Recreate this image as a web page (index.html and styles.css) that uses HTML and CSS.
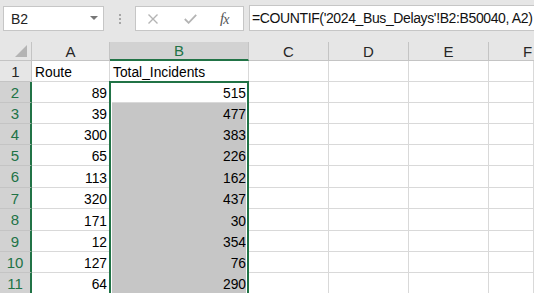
FILE: index.html
```html
<!DOCTYPE html>
<html lang="en">

<head>
    <meta charset="UTF-8">
    <title>Bus Delays</title>
    <link rel="stylesheet" href="styles.css">
</head>

<body>
    <div class="toolbar">
        <div class="namebox"><span>B2</span><span class="caret"></span></div>
        <div class="grip"><i></i><i></i><i></i></div>
        <div class="fbuttons">
            <svg class="ico-x" width="10" height="10" viewBox="0 0 10 10">
                <path d="M0.5 0.5 L9.5 9.5 M9.5 0.5 L0.5 9.5" stroke="#b4b4b4" stroke-width="1.4" fill="none" />
            </svg>
            <svg class="ico-ok" width="13" height="10" viewBox="0 0 13 10">
                <path d="M0.8 5 L4.6 8.8 L12.2 0.8" stroke="#b4b4b4" stroke-width="1.8" fill="none" />
            </svg>
            <span class="fx">f<span>x</span></span>
        </div>
        <div class="formula">=COUNTIF('2024_Bus_Delays'!B2:B50040, A2)</div>
    </div>

    <div class="sheet">
        <div class="hd corner"></div>
        <div class="hd">A</div>
        <div class="hd csel">B</div>
        <div class="hd">C</div>
        <div class="hd">D</div>
        <div class="hd">E</div>
        <div class="hd cut">F</div>

        <div class="rh">1</div>
        <div class="c">Route</div>
        <div class="c">Total_Incidents</div>
        <div class="c"></div><div class="c"></div><div class="c"></div><div class="c"></div>

        <div class="rh rsel">2</div>
        <div class="c num">89</div>
        <div class="c num">515</div>
        <div class="c"></div><div class="c"></div><div class="c"></div><div class="c"></div>

        <div class="rh rsel">3</div>
        <div class="c num">39</div>
        <div class="c num sel">477</div>
        <div class="c"></div><div class="c"></div><div class="c"></div><div class="c"></div>

        <div class="rh rsel">4</div>
        <div class="c num">300</div>
        <div class="c num sel">383</div>
        <div class="c"></div><div class="c"></div><div class="c"></div><div class="c"></div>

        <div class="rh rsel">5</div>
        <div class="c num">65</div>
        <div class="c num sel">226</div>
        <div class="c"></div><div class="c"></div><div class="c"></div><div class="c"></div>

        <div class="rh rsel">6</div>
        <div class="c num">113</div>
        <div class="c num sel">162</div>
        <div class="c"></div><div class="c"></div><div class="c"></div><div class="c"></div>

        <div class="rh rsel">7</div>
        <div class="c num">320</div>
        <div class="c num sel">437</div>
        <div class="c"></div><div class="c"></div><div class="c"></div><div class="c"></div>

        <div class="rh rsel">8</div>
        <div class="c num">171</div>
        <div class="c num sel">30</div>
        <div class="c"></div><div class="c"></div><div class="c"></div><div class="c"></div>

        <div class="rh rsel">9</div>
        <div class="c num">12</div>
        <div class="c num sel">354</div>
        <div class="c"></div><div class="c"></div><div class="c"></div><div class="c"></div>

        <div class="rh rsel">10</div>
        <div class="c num">127</div>
        <div class="c num sel">76</div>
        <div class="c"></div><div class="c"></div><div class="c"></div><div class="c"></div>

        <div class="rh rsel">11</div>
        <div class="c num">64</div>
        <div class="c num sel">290</div>
        <div class="c"></div><div class="c"></div><div class="c"></div><div class="c"></div>

        <!-- selection outline over B2:B11 -->
        <div class="selbox"></div>
    </div>
</body>

</html>
```

FILE: styles.css
```css
body,
html {
    margin: 0;
    padding: 0;
    width: 534px;
    height: 293px;
    overflow: hidden;
    background: #fff;
    font-family: "Liberation Sans", Arial, sans-serif;
}

/* Formula bar */
.toolbar {
    display: flex;
    align-items: flex-start;
    height: 42px;
    padding-top: 6px;
    box-sizing: border-box;
    background: #e6e6e6;
    overflow: hidden;
}

.namebox {
    margin-left: 3px;
    width: 101px;
    height: 25px;
    box-sizing: border-box;
    border: 1px solid #c6c6c6;
    background: #fff;
    display: flex;
    align-items: center;
    justify-content: space-between;
    padding: 0 5px 0 7px;
    font-size: 14px;
    color: #222;
    flex-shrink: 0;
}

.caret {
    border-left: 4px solid transparent;
    border-right: 4px solid transparent;
    border-top: 4px solid #777;
    margin-top: -2px;
}

.grip {
    width: 31px;
    height: 25px;
    display: flex;
    flex-direction: column;
    align-items: center;
    justify-content: center;
    gap: 2px;
    flex-shrink: 0;
}

.grip i {
    width: 2px;
    height: 2px;
    background: #a6a6a6;
}

.fbuttons {
    width: 109px;
    height: 25px;
    box-sizing: border-box;
    border: 1px solid #c6c6c6;
    background: #fff;
    display: flex;
    align-items: center;
    padding-left: 12px;
    flex-shrink: 0;
}

.ico-ok {
    margin-left: 26px;
}

.fx {
    margin-left: 23px;
    font-family: "Liberation Serif", serif;
    font-style: italic;
    font-size: 15px;
    color: #555;
    letter-spacing: -1px;
}

.fx span {
    position: relative;
    top: 1px;
    font-size: 14px;
}

.formula {
    margin-left: 5px;
    margin-top: -1px;
    width: 285px;
    height: 26px;
    box-sizing: border-box;
    border: 1px solid #c6c6c6;
    border-right: 0;
    background: #fff;
    display: flex;
    align-items: center;
    padding-left: 2px;
    font-size: 14px;
    letter-spacing: -0.38px;
    color: #111;
    white-space: nowrap;
    overflow: hidden;
    flex-shrink: 0;
}

/* Grid */
.sheet {
    position: relative;
    height: 251px;
    overflow: hidden;
    display: grid;
    grid-template-columns: 32px 78px 139px 80px 80px 80px 45px;
    grid-template-rows: 19px 21px 21px 21px 21px 21px 22px 21px 22px 21px 21px 21px;
}

.hd,
.rh {
    background: #e6e6e6;
    border-right: 1px solid #c4c4c4;
    border-bottom: 1px solid #c4c4c4;
    box-sizing: border-box;
    display: flex;
    align-items: center;
    justify-content: center;
    font-size: 15px;
    color: #262626;
}

/* F is cut by the window edge */
.cut {
    justify-content: flex-start;
    padding-left: 34px;
    border-right: 0;
}

.corner {
    justify-content: flex-end;
    align-items: flex-end;
    padding: 0 4px 3px 0;
}

.corner::after {
    content: "";
    width: 0;
    height: 0;
    border-left: 12px solid transparent;
    border-bottom: 12px solid #b4b4b4;
}

.csel {
    background: #d2d2d2;
    color: #217346;
    border-bottom: 2px solid #217346;
}

.rsel {
    background: #d2d2d2;
    color: #217346;
    border-right: 2px solid #217346;
}

.c {
    border-right: 1px solid #d9d9d9;
    border-bottom: 1px solid #d9d9d9;
    box-sizing: border-box;
    display: flex;
    align-items: flex-end;
    padding: 0 3px;
    font-size: 13.8px;
    line-height: 16px;
    color: #000;
    white-space: nowrap;
}

.num {
    justify-content: flex-end;
    padding-right: 2px;
}

.sel {
    background: #c6c6c6;
    border-bottom-color: #c6c6c6;
}

.selbox {
    position: absolute;
    left: 109px;
    top: 39px;
    width: 140px;
    height: 240px;
    box-sizing: border-box;
    border: 2px solid #217346;
    box-shadow: inset 0 0 0 1px #fff;
    pointer-events: none;
}
```
